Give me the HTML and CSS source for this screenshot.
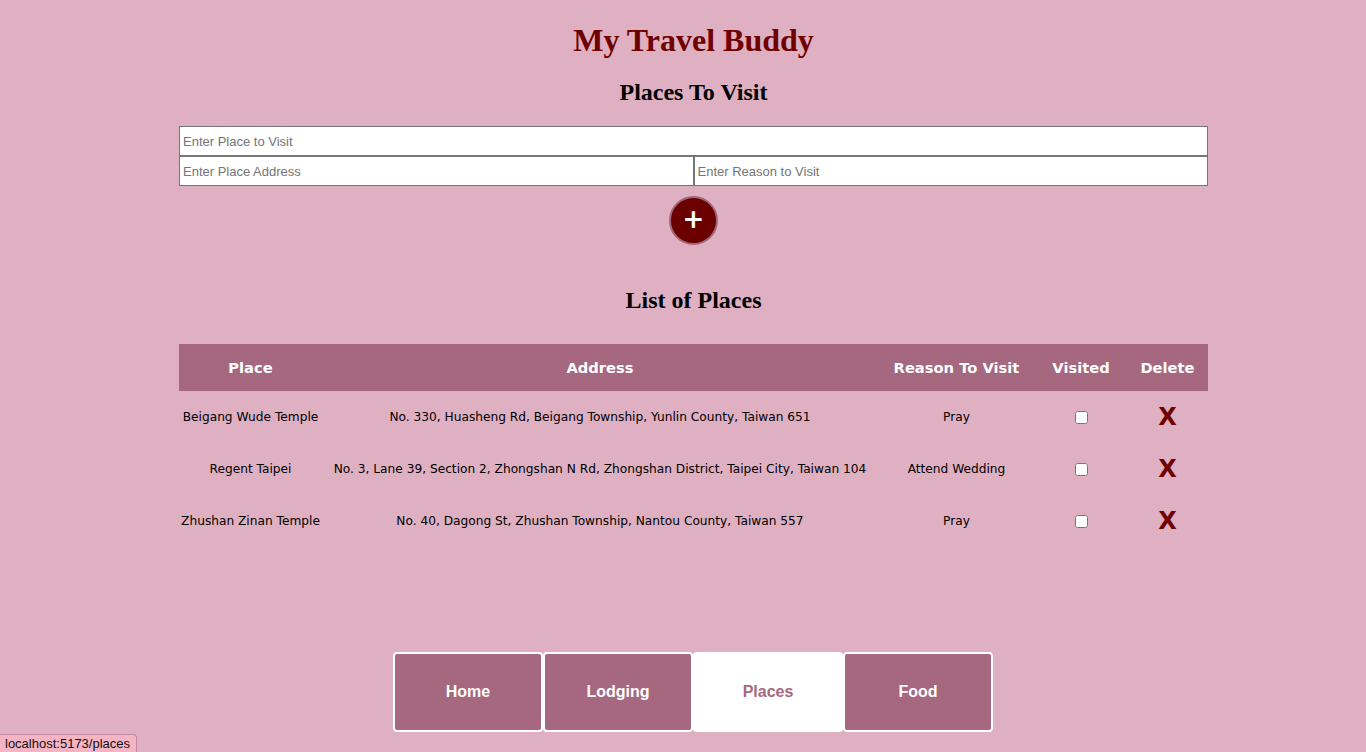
FILE: index.html
```html
<!DOCTYPE html>
<html>
<head>
<meta charset="utf-8">
<link rel="stylesheet" href="styles.css">
</head>
<body>
<div class="page">
  <h1 class="title">My Travel Buddy</h1>
  <h2 class="subtitle">Places To Visit</h2>
  <form class="form">
    <input class="field full" type="text" placeholder="Enter Place to Visit">
    <div class="row">
      <input class="field" type="text" placeholder="Enter Place Address">
      <input class="field" type="text" placeholder="Enter Reason to Visit">
    </div>
    <div class="add-wrap"><button type="button" class="add">+</button></div>
  </form>
  <h2 class="subtitle list-title">List of Places</h2>
  <table class="places">
    <colgroup>
      <col class="c-place"><col class="c-addr"><col class="c-reason"><col class="c-visited"><col class="c-delete">
    </colgroup>
    <thead>
      <tr><th>Place</th><th>Address</th><th>Reason To Visit</th><th>Visited</th><th>Delete</th></tr>
    </thead>
    <tbody>
      <tr><td>Beigang Wude Temple</td><td>No. 330, Huasheng Rd, Beigang Township, Yunlin County, Taiwan 651</td><td>Pray</td><td><input type="checkbox" class="check"></td><td><span class="del">X</span></td></tr>
      <tr><td>Regent Taipei</td><td>No. 3, Lane 39, Section 2, Zhongshan N Rd, Zhongshan District, Taipei City, Taiwan 104</td><td>Attend Wedding</td><td><input type="checkbox" class="check"></td><td><span class="del">X</span></td></tr>
      <tr><td>Zhushan Zinan Temple</td><td>No. 40, Dagong St, Zhushan Township, Nantou County, Taiwan 557</td><td>Pray</td><td><input type="checkbox" class="check"></td><td><span class="del">X</span></td></tr>
    </tbody>
  </table>
</div>
<nav class="nav">
  <a class="tab">Home</a>
  <a class="tab">Lodging</a>
  <a class="tab active">Places</a>
  <a class="tab">Food</a>
</nav>
<div class="status">localhost:5173/places</div>
</body>
</html>
```

FILE: styles.css
```css
* { box-sizing: border-box; }
html, body { margin: 0; padding: 0; }
body {
  background: #dfafc2;
  font-family: "Liberation Serif", "Times New Roman", serif;
  height: 752px;
  overflow: hidden;
  position: relative;
}
.page {
  width: 1029px;
  margin-left: 179px;
  display: flex;
  flex-direction: column;
}
.title {
  margin: 20px 0 0;
  text-align: center;
  font-size: 32px;
  line-height: 40px;
  color: #6f0000;
  font-weight: bold;
}
.subtitle {
  margin: 17px 0 0;
  text-align: center;
  font-size: 24px;
  line-height: 30px;
  color: #000;
  font-weight: bold;
}
.form {
  margin-top: 19px;
  display: flex;
  flex-direction: column;
}
.field {
  height: 30px;
  border: 1px solid #767676;
  background: #fff;
  font-family: "Liberation Sans", Arial, sans-serif;
  font-size: 13px;
  padding: 0 3px;
  margin: 0;
  outline: none;
}
.field::placeholder { color: #757575; }
.row { display: flex; }
.row .field { flex: 1 1 0; width: 50%; }
.add-wrap { display: flex; justify-content: center; margin-top: 10px; }
.add {
  width: 49px;
  height: 49px;
  border-radius: 50%;
  background: #6b0000;
  border: 2px solid #a4657b;
  color: #fff;
  font-family: "DejaVu Sans", Verdana, sans-serif;
  font-weight: bold;
  font-size: 26px;
  line-height: 1;
  padding: 0 0 3px;
  display: flex;
  align-items: center;
  justify-content: center;
}
.list-title { margin-top: 40px; }
.places {
  margin-top: 29px;
  width: 1029px;
  border-collapse: collapse;
  table-layout: fixed;
  font-family: "DejaVu Sans", Verdana, sans-serif;
}
.c-place { width: 143px; }
.c-addr { width: 556px; }
.c-reason { width: 157px; }
.c-visited { width: 92px; }
.c-delete { width: 81px; }
.places th {
  background: #a6687e;
  color: #fff;
  font-size: 14.7px;
  font-weight: bold;
  height: 47px;
  padding: 0;
  text-align: center;
}
.places td {
  font-size: 12.2px;
  height: 52px;
  padding: 0;
  text-align: center;
  color: #000;
  white-space: nowrap;
}
.check {
  width: 13px;
  height: 13px;
  margin: 0;
  vertical-align: middle;
}
.del {
  color: #6f0000;
  font-weight: bold;
  font-size: 24px;
  font-family: "DejaVu Sans", Verdana, sans-serif;
  vertical-align: middle;
}
.nav {
  position: absolute;
  left: 393px;
  top: 652px;
  display: flex;
}
.tab {
  width: 150px;
  height: 80px;
  border: 2px solid #fff;
  border-radius: 4px;
  background: #a6687e;
  color: #fff;
  font-family: "Liberation Sans", Arial, sans-serif;
  font-weight: bold;
  font-size: 16px;
  display: flex;
  align-items: center;
  justify-content: center;
}
.tab.active { background: #fff; color: #a6687e; }
.status {
  position: absolute;
  left: 0;
  bottom: 0;
  height: 18px;
  padding: 0 6px 0 5px;
  background: #f5b4c4;
  border: 1px solid #c48a9c;
  border-left: none;
  border-bottom: none;
  border-top-right-radius: 4px;
  font-family: "Liberation Sans", Arial, sans-serif;
  font-size: 13px;
  line-height: 17px;
  color: #111;
}
```
